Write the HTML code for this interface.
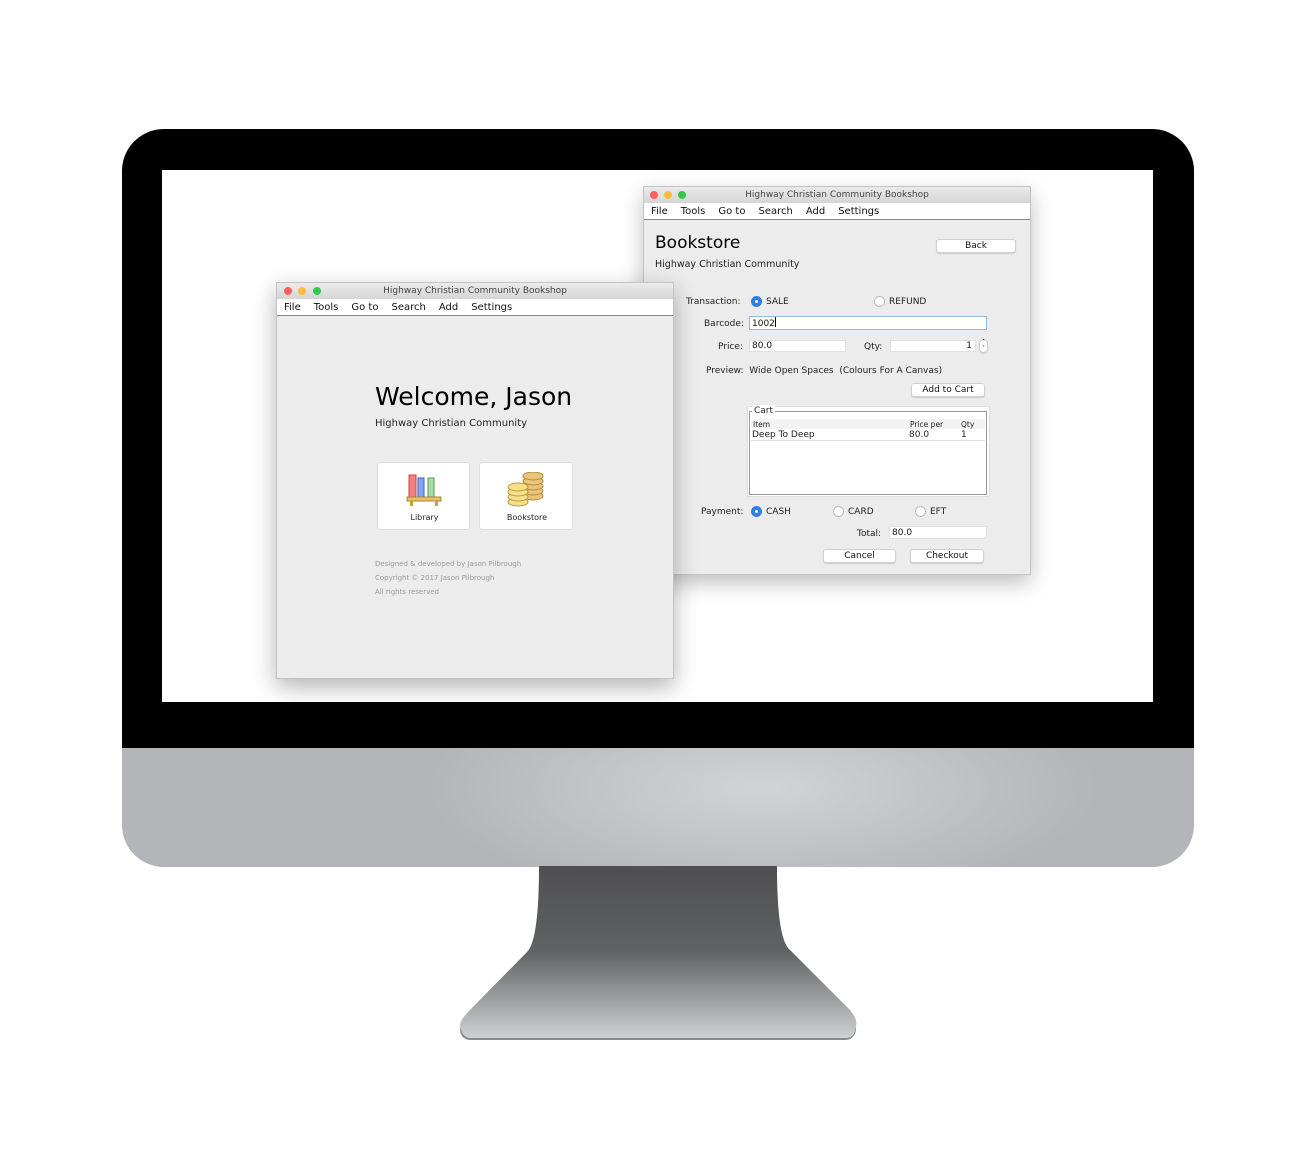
<!DOCTYPE html>
<html><head><meta charset="utf-8"><style>
*{margin:0;padding:0;box-sizing:border-box}
body{width:1300px;height:1168px;background:#fff;position:relative;overflow:hidden;font-family:"DejaVu Sans","Liberation Sans",sans-serif;color:#111}
.a{position:absolute}
.bezel{left:122px;top:129px;width:1072px;height:640px;background:#000;border-radius:42px 42px 0 0}
.chin{left:122px;top:748px;width:1072px;height:119px;border-radius:0 0 42px 42px;background:radial-gradient(ellipse 420px 140px at 640px 40px,#d2d3d5,#b4b5b8 80%)}
.screen{left:162px;top:170px;width:991px;height:532px;background:#fff}
.win{background:#ececec;border:1px solid #c4c4c4;overflow:hidden}
.tb{position:absolute;left:0;right:0;top:0;height:16px;background:linear-gradient(#ebebeb,#d5d5d5);font-size:9px;color:#444;text-align:center;line-height:17px}
.dot{position:absolute;top:4px;width:8px;height:8px;border-radius:50%}
.mb{position:absolute;left:0;right:0;top:16px;height:17px;background:#fff;border-bottom:1px solid #888;font-size:10px;line-height:17px;padding-left:7px;word-spacing:0}
.mb span{margin-right:13px}
.t{position:absolute;white-space:nowrap;font-size:9px;color:#222;padding-top:1px}
.fld{position:absolute;background:#fff;border:1px solid #e0e0e0;font-size:9px;line-height:11px;padding-left:2px}
.btn{position:absolute;background:#fff;border:1px solid #d0d0d0;border-radius:3px;font-size:9px;text-align:center;line-height:13px;box-shadow:0 1px 1px #ccc}
.rad{position:absolute;width:11px;height:11px;border-radius:50%;background:#fff;border:1px solid #bbb}
.rad.on{background:#2f7fe6;border-color:#2f7fe6}
.rad.on:after{content:"";position:absolute;left:3px;top:3px;width:3px;height:3px;border-radius:50%;background:#fff}
</style></head><body>
<div class="a bezel"></div>
<div class="a chin"></div>
<div class="a screen"></div>
<svg class="a" style="left:0;top:0" width="1300" height="1168">
<defs>
<linearGradient id="st" x1="0" y1="0" x2="0" y2="1"><stop offset="0" stop-color="#4f4f51"/><stop offset="0.5" stop-color="#616264"/><stop offset="1" stop-color="#cfd0d2"/></linearGradient>
</defs>
<path d="M539 866 L777 866 Q777 940 790 950 L850 1010 Q858 1020 856 1026 L856 1030 Q852 1038 845 1038 L471 1038 Q462 1038 460 1030 L460 1024 Q462 1018 468 1012 L527 952 Q539 940 539 866Z" fill="url(#st)"/>
<path d="M460 1026 Q462 1038 471 1038 L845 1038 Q855 1038 856 1026 L856 1030 Q854 1040 845 1040 L471 1040 Q461 1040 460 1030Z" fill="#8a8b8e"/>
</svg>

<!-- right window -->
<div class="a win" style="left:643px;top:186px;width:388px;height:389px;box-shadow:0 8px 20px rgba(0,0,0,.25)">
<div class="tb">Highway Christian Community Bookshop
<div class="dot" style="left:6px;background:#fc605c"></div><div class="dot" style="left:20px;background:#fdbc40"></div><div class="dot" style="left:34px;background:#34c84a"></div></div>
<div class="mb"><span>File</span><span>Tools</span><span>Go to</span><span>Search</span><span>Add</span><span>Settings</span></div>
<div class="t" style="left:11px;top:45px;font-size:17px;color:#000">Bookstore</div>
<div class="t" style="left:11px;top:71px;font-size:9.5px">Highway Christian Community</div>
<div class="btn" style="left:292px;top:52px;width:80px;height:14px">Back</div>
<div class="t" style="left:42px;top:109px">Transaction:</div>
<div class="rad on" style="left:107px;top:109px"></div><div class="t" style="left:122px;top:109px">SALE</div>
<div class="rad" style="left:230px;top:109px"></div><div class="t" style="left:245px;top:109px">REFUND</div>
<div class="t" style="left:60px;top:131px">Barcode:</div>
<div class="fld" style="left:105px;top:129px;width:238px;height:14px;border-color:#9ab8e0;line-height:12px">1002<span style="border-left:1px solid #000;height:10px;display:inline-block;vertical-align:-1px"></span></div>
<div class="t" style="left:74px;top:154px">Price:</div>
<div class="fld" style="left:105px;top:153px;width:97px;height:12px">80.0</div>
<div class="t" style="left:220px;top:154px">Qty:</div>
<div class="fld" style="left:246px;top:153px;width:86px;height:12px;text-align:right;padding-right:3px">1</div>
<div class="btn" style="left:335px;top:152px;width:9px;height:14px;border-radius:5px;font-size:6px;line-height:6px">˄<br>˅</div>
<div class="t" style="left:62px;top:178px">Preview:&nbsp; Wide Open Spaces&nbsp; (Colours For A Canvas)</div>
<div class="btn" style="left:267px;top:196px;width:74px;height:14px">Add to Cart</div>
<div class="a" style="left:103px;top:219px;width:243px;height:91px;background:#fff;border:1px solid #ddd"></div>
<div class="a" style="left:105px;top:224px;width:238px;height:84px;border:1px solid #999"></div>
<div class="t" style="left:108px;top:218px;background:#fff;padding:1px 2px 0">Cart</div>
<div class="a" style="left:107px;top:232px;width:234px;height:10px;background:#f3f3f3;font-size:7.5px"><span class="t" style="left:2px;top:0;font-size:7.5px">Item</span><span class="t" style="left:159px;top:0;font-size:7.5px">Price per</span><span class="t" style="left:210px;top:0;font-size:7.5px">Qty</span></div>
<div class="a" style="left:107px;top:242px;width:234px;height:12px;border-bottom:1px solid #ddd"><span class="t" style="left:1px;top:0">Deep To Deep</span><span class="t" style="left:158px;top:0">80.0</span><span class="t" style="left:210px;top:0">1</span></div>
<div class="t" style="left:57px;top:319px">Payment:</div>
<div class="rad on" style="left:107px;top:319px"></div><div class="t" style="left:122px;top:319px">CASH</div>
<div class="rad" style="left:189px;top:319px"></div><div class="t" style="left:204px;top:319px">CARD</div>
<div class="rad" style="left:271px;top:319px"></div><div class="t" style="left:286px;top:319px">EFT</div>
<div class="t" style="left:213px;top:341px">Total:</div>
<div class="fld" style="left:245px;top:339px;width:98px;height:13px;line-height:12px">80.0</div>
<div class="btn" style="left:179px;top:362px;width:73px;height:14px">Cancel</div>
<div class="btn" style="left:266px;top:362px;width:74px;height:14px">Checkout</div>
</div>

<!-- left window -->
<div class="a win" style="left:276px;top:282px;width:398px;height:397px;box-shadow:0 8px 22px rgba(0,0,0,.3)">
<div class="tb">Highway Christian Community Bookshop
<div class="dot" style="left:7px;background:#fc605c"></div><div class="dot" style="left:21px;background:#fdbc40"></div><div class="dot" style="left:36px;background:#34c84a"></div></div>
<div class="mb"><span>File</span><span>Tools</span><span>Go to</span><span>Search</span><span>Add</span><span>Settings</span></div>
<div class="t" style="left:98px;top:98px;font-size:25px;color:#000">Welcome, Jason</div>
<div class="t" style="left:98px;top:134px;font-size:10px">Highway Christian Community</div>
<div class="a" style="left:100px;top:179px;width:93px;height:68px;background:#fff;border:1px solid #ddd;border-radius:3px">
<svg class="a" style="left:28px;top:10px" width="38" height="36">
<rect x="3" y="2" width="7" height="22" fill="#f47f7f" stroke="#c44" stroke-width="1"/>
<rect x="12" y="5" width="6" height="19" fill="#7fa6ee" stroke="#3a63b8"/>
<rect x="22" y="5" width="6" height="19" fill="#a8dca8" stroke="#5a9a5a"/>
<rect x="1" y="24" width="34" height="4" fill="#e7c06b" stroke="#a88430"/>
<rect x="4" y="28" width="3" height="5" fill="#caa040"/><rect x="29" y="28" width="3" height="5" fill="#caa040"/>
</svg>
<div class="t" style="left:0;width:93px;text-align:center;top:49px;font-size:8px">Library</div></div>
<div class="a" style="left:202px;top:179px;width:94px;height:68px;background:#fff;border:1px solid #ddd;border-radius:3px">
<svg class="a" style="left:27px;top:9px" width="40" height="36">
<g fill="#e9c47a" stroke="#b08a3c"><ellipse cx="26" cy="24" rx="10" ry="4"/><ellipse cx="26" cy="19" rx="10" ry="4"/><ellipse cx="26" cy="14" rx="10" ry="4"/><ellipse cx="26" cy="9" rx="10" ry="4"/><ellipse cx="26" cy="4" rx="10" ry="4"/></g>
<g fill="#f7e08a" stroke="#b8993c"><ellipse cx="11" cy="30" rx="10" ry="4"/><ellipse cx="11" cy="25" rx="10" ry="4"/><ellipse cx="11" cy="20" rx="10" ry="4"/><ellipse cx="11" cy="15" rx="10" ry="4"/></g>
</svg>
<div class="t" style="left:0;width:94px;text-align:center;top:49px;font-size:8px">Bookstore</div></div>
<div class="t" style="left:98px;top:276px;font-size:7px;color:#999">Designed &amp; developed by Jason Pilbrough</div>
<div class="t" style="left:98px;top:290px;font-size:7px;color:#999">Copyright © 2017 Jason Pilbrough</div>
<div class="t" style="left:98px;top:304px;font-size:7px;color:#999">All rights reserved</div>
</div>
</body></html>
